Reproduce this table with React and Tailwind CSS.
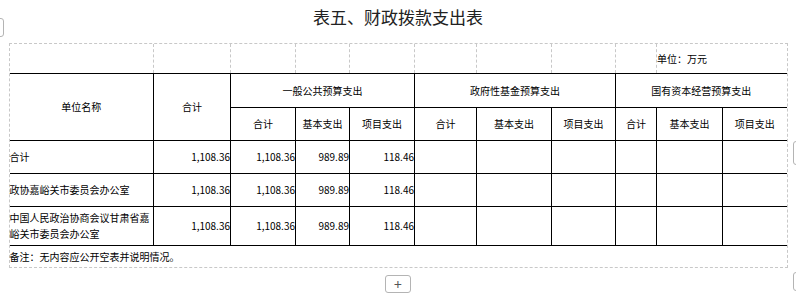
import React from "react";

const rows = [
  { name: "合计", total: "1,108.36", sum: "1,108.36", basic: "989.89", project: "118.46", tall: false },
  { name: "政协嘉峪关市委员会办公室", total: "1,108.36", sum: "1,108.36", basic: "989.89", project: "118.46", tall: false },
  { name: "中国人民政治协商会议甘肃省嘉峪关市委员会办公室", total: "1,108.36", sum: "1,108.36", basic: "989.89", project: "118.46", tall: true },
];

const App = () => {
  const cell = "border-r border-b border-black";
  const lastCell = "border-b border-black";
  const topCell = "border-r border-dashed border-[#c8c8c8]";

  return (
    <div className="relative w-[796px] h-[303px] bg-white text-black overflow-hidden" style={{ fontFamily: '"Noto Sans CJK SC", sans-serif' }}>
      {/* side handles */}
      <div className="absolute left-[-8px] top-[18px] w-[12px] h-[19px] rounded-[3px] border border-[#b4b4b4] bg-white"></div>
      <div className="absolute left-[793px] top-[141px] w-[12px] h-[24px] rounded-[3px] border border-[#b4b4b4] bg-white"></div>
      <div className="absolute left-[793px] top-[272px] w-[12px] h-[19px] rounded-[3px] border border-[#b4b4b4] bg-white"></div>

      {/* Title */}
      <h1 className="h-[33px] leading-[33px] text-center text-[17px] text-[#222]">表五、财政拨款支出表</h1>

      {/* Table frame */}
      <div className="mt-[10px] mx-auto w-[779px] border border-dashed border-[#c8c8c8]">
        <table className="w-[777px] table-fixed border-collapse text-[10px]">
          <colgroup>
            <col className="w-[144px]" />
            <col className="w-[77px]" />
            <col className="w-[65px]" />
            <col className="w-[54px]" />
            <col className="w-[65px]" />
            <col className="w-[62px]" />
            <col className="w-[75px]" />
            <col className="w-[64px]" />
            <col className="w-[41px]" />
            <col className="w-[66px]" />
            <col className="w-[64px]" />
          </colgroup>
          <tbody>
            <tr className="h-[29px]">
              <td className={topCell}></td>
              <td className={topCell}></td>
              <td className={topCell}></td>
              <td className={topCell}></td>
              <td className={topCell}></td>
              <td className={topCell}></td>
              <td className={topCell}></td>
              <td className={topCell}></td>
              <td className={topCell}></td>
              <td colSpan={2} className="text-left align-middle">单位：万元</td>
            </tr>
            <tr className="h-[34px]">
              <td rowSpan={2} className={`${cell} border-t text-center`}>单位名称</td>
              <td rowSpan={2} className={`${cell} border-t text-center`}>合计</td>
              <td colSpan={3} className={`${cell} border-t text-center`}>一般公共预算支出</td>
              <td colSpan={3} className={`${cell} border-t text-center`}>政府性基金预算支出</td>
              <td colSpan={3} className={`${lastCell} border-t text-center`}>国有资本经营预算支出</td>
            </tr>
            <tr className="h-[33px]">
              <td className={`${cell} text-center`}>合计</td>
              <td className={`${cell} text-center`}>基本支出</td>
              <td className={`${cell} text-center`}>项目支出</td>
              <td className={`${cell} text-center`}>合计</td>
              <td className={`${cell} text-center`}>基本支出</td>
              <td className={`${cell} text-center`}>项目支出</td>
              <td className={`${cell} text-center`}>合计</td>
              <td className={`${cell} text-center`}>基本支出</td>
              <td className={`${lastCell} text-center`}>项目支出</td>
            </tr>
            {rows.map((r) => (
              <tr key={r.name} className={r.tall ? "h-[39px]" : "h-[33px]"}>
                <td className={`${cell} text-left leading-[16px]`}>{r.name}</td>
                <td className={`${cell} text-right`}>{r.total}</td>
                <td className={`${cell} text-right`}>{r.sum}</td>
                <td className={`${cell} text-right`}>{r.basic}</td>
                <td className={`${cell} text-right`}>{r.project}</td>
                <td className={cell}></td>
                <td className={cell}></td>
                <td className={cell}></td>
                <td className={cell}></td>
                <td className={cell}></td>
                <td className={lastCell}></td>
              </tr>
            ))}
            <tr className="h-[22px]">
              <td colSpan={11} className="text-left align-middle">备注：无内容应公开空表并说明情况。</td>
            </tr>
          </tbody>
        </table>
      </div>

      {/* add button */}
      <div className="flex justify-center mt-[7px]">
        <button className="w-[26px] h-[18px] rounded-[3px] border border-[#b4b4b4] bg-white flex items-center justify-center text-[#555] text-[14px] leading-none">
          +
        </button>
      </div>
    </div>
  );
};

export default App;
